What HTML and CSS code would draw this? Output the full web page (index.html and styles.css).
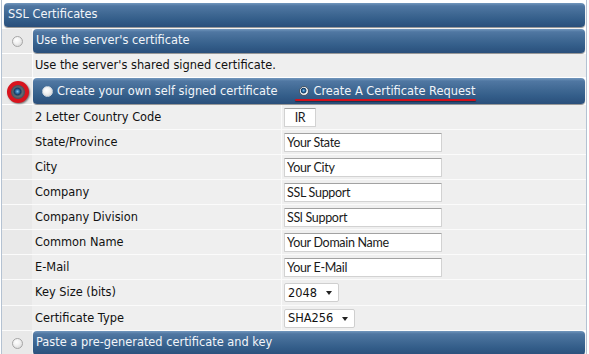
FILE: index.html
```html
<!DOCTYPE html>
<html lang="en">
<head>
    <meta charset="UTF-8">
    <title>SSL Certificates</title>
    <link rel="stylesheet" href="styles.css">
</head>
<body>
    <div class="panel">
        <div class="bar head">SSL Certificates</div>

        <div class="row">
            <div class="pick"><span class="radio"></span></div>
            <div class="bar">Use the server's certificate</div>
        </div>
        <div class="row">
            <div class="pick"></div>
            <div class="desc">Use the server's shared signed certificate.</div>
        </div>
        <div class="row">
            <div class="pick"><span class="ring"><span class="radio on"></span></span></div>
            <div class="bar choices">
                <label class="choice"><span class="radio"></span>Create your own self signed certificate</label>
                <label class="choice marked"><span class="radio on"></span>Create A Certificate Request</label>
            </div>
        </div>

        <div class="form">
            <div class="pick"></div>
            <div class="label">2 Letter Country Code</div>
            <div class="value"><input class="field short" type="text" value="IR"></div>

            <div class="pick"></div>
            <div class="label">State/Province</div>
            <div class="value"><input class="field" type="text" value="Your State"></div>

            <div class="pick"></div>
            <div class="label">City</div>
            <div class="value"><input class="field" type="text" value="Your City"></div>

            <div class="pick"></div>
            <div class="label">Company</div>
            <div class="value"><input class="field" type="text" value="SSL Support"></div>

            <div class="pick"></div>
            <div class="label">Company Division</div>
            <div class="value"><input class="field" type="text" value="SSl Support"></div>

            <div class="pick"></div>
            <div class="label">Common Name</div>
            <div class="value"><input class="field" type="text" value="Your Domain Name"></div>

            <div class="pick"></div>
            <div class="label">E-Mail</div>
            <div class="value"><input class="field" type="text" value="Your E-Mail"></div>

            <div class="pick tall"></div>
            <div class="label tall">Key Size (bits)</div>
            <div class="value tall"><span class="select">2048</span></div>

            <div class="pick"></div>
            <div class="label">Certificate Type</div>
            <div class="value"><span class="select">SHA256</span></div>
        </div>

        <div class="row">
            <div class="pick"><span class="radio"></span></div>
            <div class="bar">Paste a pre-generated certificate and key</div>
        </div>
    </div>
</body>
</html>
```

FILE: styles.css
```css
:root {
    --row-bg: #efefef;
    --side-bg: #e9e9e9;
    --edge: #b4c2d2;
}

body {
    margin: 0;
    background: #fff;
    font-family: "DejaVu Sans", Verdana, sans-serif;
    font-size: 11.4px;
    color: #111;
}

.panel {
    width: 584px;
    margin-left: 1px;
    padding-top: 3px;
    border-left: 1px solid var(--edge);
    border-right: 1px solid var(--edge);
    background: #fff;
}

.bar {
    height: 24px;
    line-height: 23px;
    padding-left: 3px;
    margin-right: 1px;
    border-radius: 4px;
    color: #f2f5f9;
    background: linear-gradient(#7297bd 0%, #5077a2 12%, #3f6893 45%, #335d89 70%, #2a4f7b 100%);
    box-shadow: 0 1px 1px rgba(0, 0, 0, 0.45);
    white-space: nowrap;
}

.head {
    margin: 0 1px 2px 2px;
    padding-left: 4px;
}

.row {
    display: flex;
    border-bottom: 1px solid #fff;
}

.row .bar {
    flex: 1;
}

.pick {
    width: 30px;
    flex: none;
    display: flex;
    align-items: center;
    justify-content: center;
    background: var(--side-bg);
    border-right: 1px solid #fbfbfb;
}

.desc {
    flex: 1;
    height: 23px;
    line-height: 22px;
    padding-left: 2px;
    background: var(--row-bg);
}

.choices {
    height: 26px;
    line-height: 26px;
    display: flex;
    gap: 22px;
    padding-left: 9px;
}

.choice {
    display: flex;
    align-items: center;
    gap: 4px;
    position: relative;
}

.marked::after {
    content: "";
    position: absolute;
    left: -4px;
    right: -1px;
    bottom: 3px;
    height: 2px;
    border-radius: 1px;
    background: #d3101c;
    box-shadow: 0 1px 1px rgba(0, 0, 0, 0.4);
}

.radio {
    display: inline-block;
    width: 11px;
    height: 11px;
    border-radius: 50%;
    box-sizing: border-box;
    border: 1px solid #a6a6a6;
    background: radial-gradient(circle at 40% 35%, #fff 0%, #f2f2f2 40%, #cfcfcf 100%);
}

.choice .radio {
    border-color: #c8d2dc;
}

.choice .radio.on {
    width: 10px;
    height: 10px;
}

.radio.on {
    background: radial-gradient(circle at 45% 45%, #8cc4ec 0%, #2a6ca4 22%, #12365c 40%, #f4f6f8 52%, #dcdfe2 100%);
    border-color: #4e5862;
}

.ring {
    display: flex;
    align-items: center;
    justify-content: center;
    width: 22px;
    height: 22px;
    margin: 2px 0 0 1px;
    border-radius: 50%;
    box-sizing: border-box;
    border: 4px solid #d8141e;
    background: #4a5560;
    box-shadow: 1px 1px 2px rgba(0, 0, 0, 0.5);
}

.ring .radio {
    width: 12px;
    height: 12px;
    border-color: #5a626a;
    background: radial-gradient(circle at 45% 45%, #86c0ea 0%, #2c6ea6 25%, #163c62 42%, #59626b 58%, #8a9199 100%);
}

.form {
    display: grid;
    grid-template-columns: 30px 250px 1fr;
}

.form > div {
    height: 24px;
    border-bottom: 1px solid #fbfbfb;
    background: var(--row-bg);
}

.form > .pick {
    background: var(--side-bg);
}

.form > .tall {
    height: 25px;
}

.label {
    line-height: 24px;
    padding-left: 3px;
    border-right: 1px solid #fbfbfb;
}

.value {
    display: flex;
    align-items: center;
    padding-left: 2px;
}

.field {
    width: 158px;
    height: 19px;
    box-sizing: border-box;
    margin: 0;
    padding: 0 2px;
    border: 1px solid #d2d2d2;
    border-top-color: #a2a2a2;
    border-radius: 1px;
    background: #fff;
    font-family: Lato, "Open Sans", sans-serif;
    font-size: 12.5px;
    letter-spacing: -0.3px;
    color: #1a1a1a;
}

.field.short {
    width: 32px;
    text-align: center;
}

.select {
    display: inline-flex;
    align-items: center;
    gap: 9px;
    height: 19px;
    padding: 0 6px 0 3px;
    box-sizing: border-box;
    border: 1px solid #cfcfcf;
    border-radius: 2px;
    background: #fff;
}

.select::after {
    content: "";
    border-left: 3.5px solid transparent;
    border-right: 3.5px solid transparent;
    border-top: 4px solid #222;
    margin-top: 1px;
}
```
